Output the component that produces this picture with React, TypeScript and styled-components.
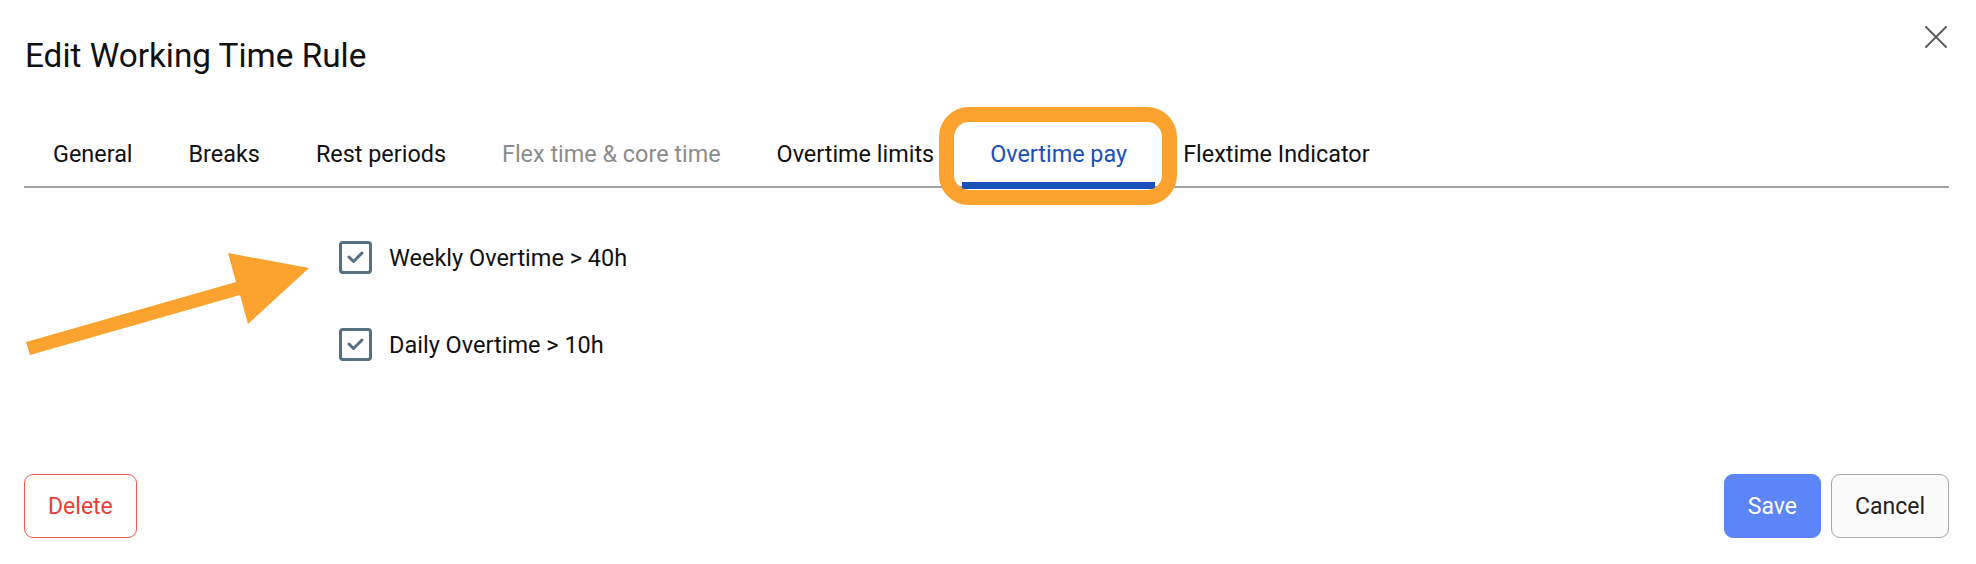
import React from 'react';
import styled, { createGlobalStyle } from 'styled-components';

const GlobalStyle = createGlobalStyle`
  html, body {
    margin: 0;
    padding: 0;
    background: #ffffff;
  }
  body {
    font-family: Roboto, "Liberation Sans", Arial, sans-serif;
    color: #111111;
  }
`;

const Dialog = styled.div`
  width: 1976px;
  height: 564px;
  box-sizing: border-box;
  padding: 0 27px 26px 24px;
  display: flex;
  flex-direction: column;
  background: #ffffff;
  overflow: hidden;
`;

const Header = styled.div`
  display: flex;
  justify-content: space-between;
  align-items: flex-start;
  padding-top: 26px;
`;

const Title = styled.h1`
  margin: 10px 0 0 1px;
  font-size: 33.3px;
  line-height: 40px;
  font-weight: 400;
  color: #111111;
`;

const CloseButton = styled.button`
  border: none;
  background: transparent;
  padding: 0 2px 0 0;
  width: 24px;
  height: 22px;
  cursor: pointer;
  color: #5f5f5f;
  display: flex;

  svg {
    width: 22px;
    height: 22px;
  }
`;

const TabBar = styled.div`
  margin-top: 44px;
  display: flex;
  padding-left: 1px;
  border-bottom: 2px solid #a3a3a3;
`;

const Tab = styled.div<{ $active?: boolean; $disabled?: boolean }>`
  position: relative;
  padding: 20px 28px 18px;
  font-size: 23.4px;
  line-height: 28px;
  white-space: nowrap;
  color: ${(p) => (p.$active ? '#1b50b9' : p.$disabled ? '#8c8c8c' : '#111111')};

  ${(p) =>
    p.$active &&
    `
    &::after {
      content: '';
      position: absolute;
      left: 0;
      right: 0;
      bottom: -3px;
      height: 7px;
      background: #1b50b9;
    }
  `}
`;

const Highlight = styled.div`
  position: absolute;
  top: -13px;
  bottom: -19px;
  left: -23px;
  right: -22px;
  border: 15px solid #fca32f;
  border-radius: 30px;
  pointer-events: none;
  z-index: 2;
`;

const Content = styled.div`
  position: relative;
  display: flex;
  flex-direction: column;
  gap: 54px;
  padding: 53px 0 0 315px;
`;

const Row = styled.label`
  display: flex;
  align-items: center;
  gap: 17px;
  font-size: 23.5px;
  line-height: 28px;
  color: #111111;
`;

const Box = styled.span`
  width: 33px;
  height: 33px;
  box-sizing: border-box;
  border: 3px solid #56707f;
  border-radius: 4px;
  display: flex;
  align-items: center;
  justify-content: center;

  svg {
    width: 27px;
    height: 27px;
  }
`;

const Arrow = styled.svg`
  position: absolute;
  left: -4px;
  top: 57px;
  width: 300px;
  height: 115px;
`;

const Footer = styled.div`
  margin-top: auto;
  display: flex;
  align-items: center;
  gap: 10px;
`;

const Button = styled.button<{ $variant: 'danger' | 'primary' | 'default' }>`
  height: 64px;
  box-sizing: border-box;
  padding: 0 23px;
  border-radius: 9px;
  font-family: Roboto, "Liberation Sans", Arial, sans-serif;
  font-size: 23px;
  cursor: pointer;
  border: 1.5px solid
    ${(p) =>
      p.$variant === 'danger' ? '#ef5a52' : p.$variant === 'primary' ? '#5c85f7' : '#a8a8a8'};
  background: ${(p) =>
    p.$variant === 'primary' ? '#5c85f7' : p.$variant === 'default' ? '#fafafa' : '#ffffff'};
  color: ${(p) =>
    p.$variant === 'danger' ? '#e8403a' : p.$variant === 'primary' ? '#ffffff' : '#222222'};
`;

const Spacer = styled.div`
  flex: 1;
`;

const tabs = [
  { label: 'General' },
  { label: 'Breaks' },
  { label: 'Rest periods' },
  { label: 'Flex time & core time', disabled: true },
  { label: 'Overtime limits' },
  { label: 'Overtime pay', active: true },
  { label: 'Flextime Indicator' },
];

const options = ['Weekly Overtime > 40h', 'Daily Overtime > 10h'];

const Check = () => (
  <Box>
    <svg viewBox="0 0 27 27" fill="none">
      <polyline
        points="7,13 11.5,17.5 20,9"
        stroke="#56707f"
        strokeWidth="3"
        strokeLinecap="round"
        strokeLinejoin="round"
      />
    </svg>
  </Box>
);

export default function App() {
  return (
    <>
      <GlobalStyle />
      <Dialog>
        <Header>
          <Title>Edit Working Time Rule</Title>
          <CloseButton aria-label="Close">
            <svg viewBox="0 0 22 22" fill="none">
              <path d="M1 1 L21 21 M21 1 L1 21" stroke="currentColor" strokeWidth="2" strokeLinecap="round" />
            </svg>
          </CloseButton>
        </Header>

        <TabBar>
          {tabs.map((t) => (
            <Tab key={t.label} $active={t.active} $disabled={t.disabled}>
              {t.label}
              {t.active && <Highlight />}
            </Tab>
          ))}
        </TabBar>

        <Content>
          <Arrow viewBox="0 0 300 115">
            <polygon
              points="6,97 216,37 208,8 289,23 228,79 220,50 10,110"
              fill="#fca32f"
            />
          </Arrow>
          {options.map((o) => (
            <Row key={o}>
              <Check />
              {o}
            </Row>
          ))}
        </Content>

        <Footer>
          <Button $variant="danger">Delete</Button>
          <Spacer />
          <Button $variant="primary">Save</Button>
          <Button $variant="default">Cancel</Button>
        </Footer>
      </Dialog>
    </>
  );
}
